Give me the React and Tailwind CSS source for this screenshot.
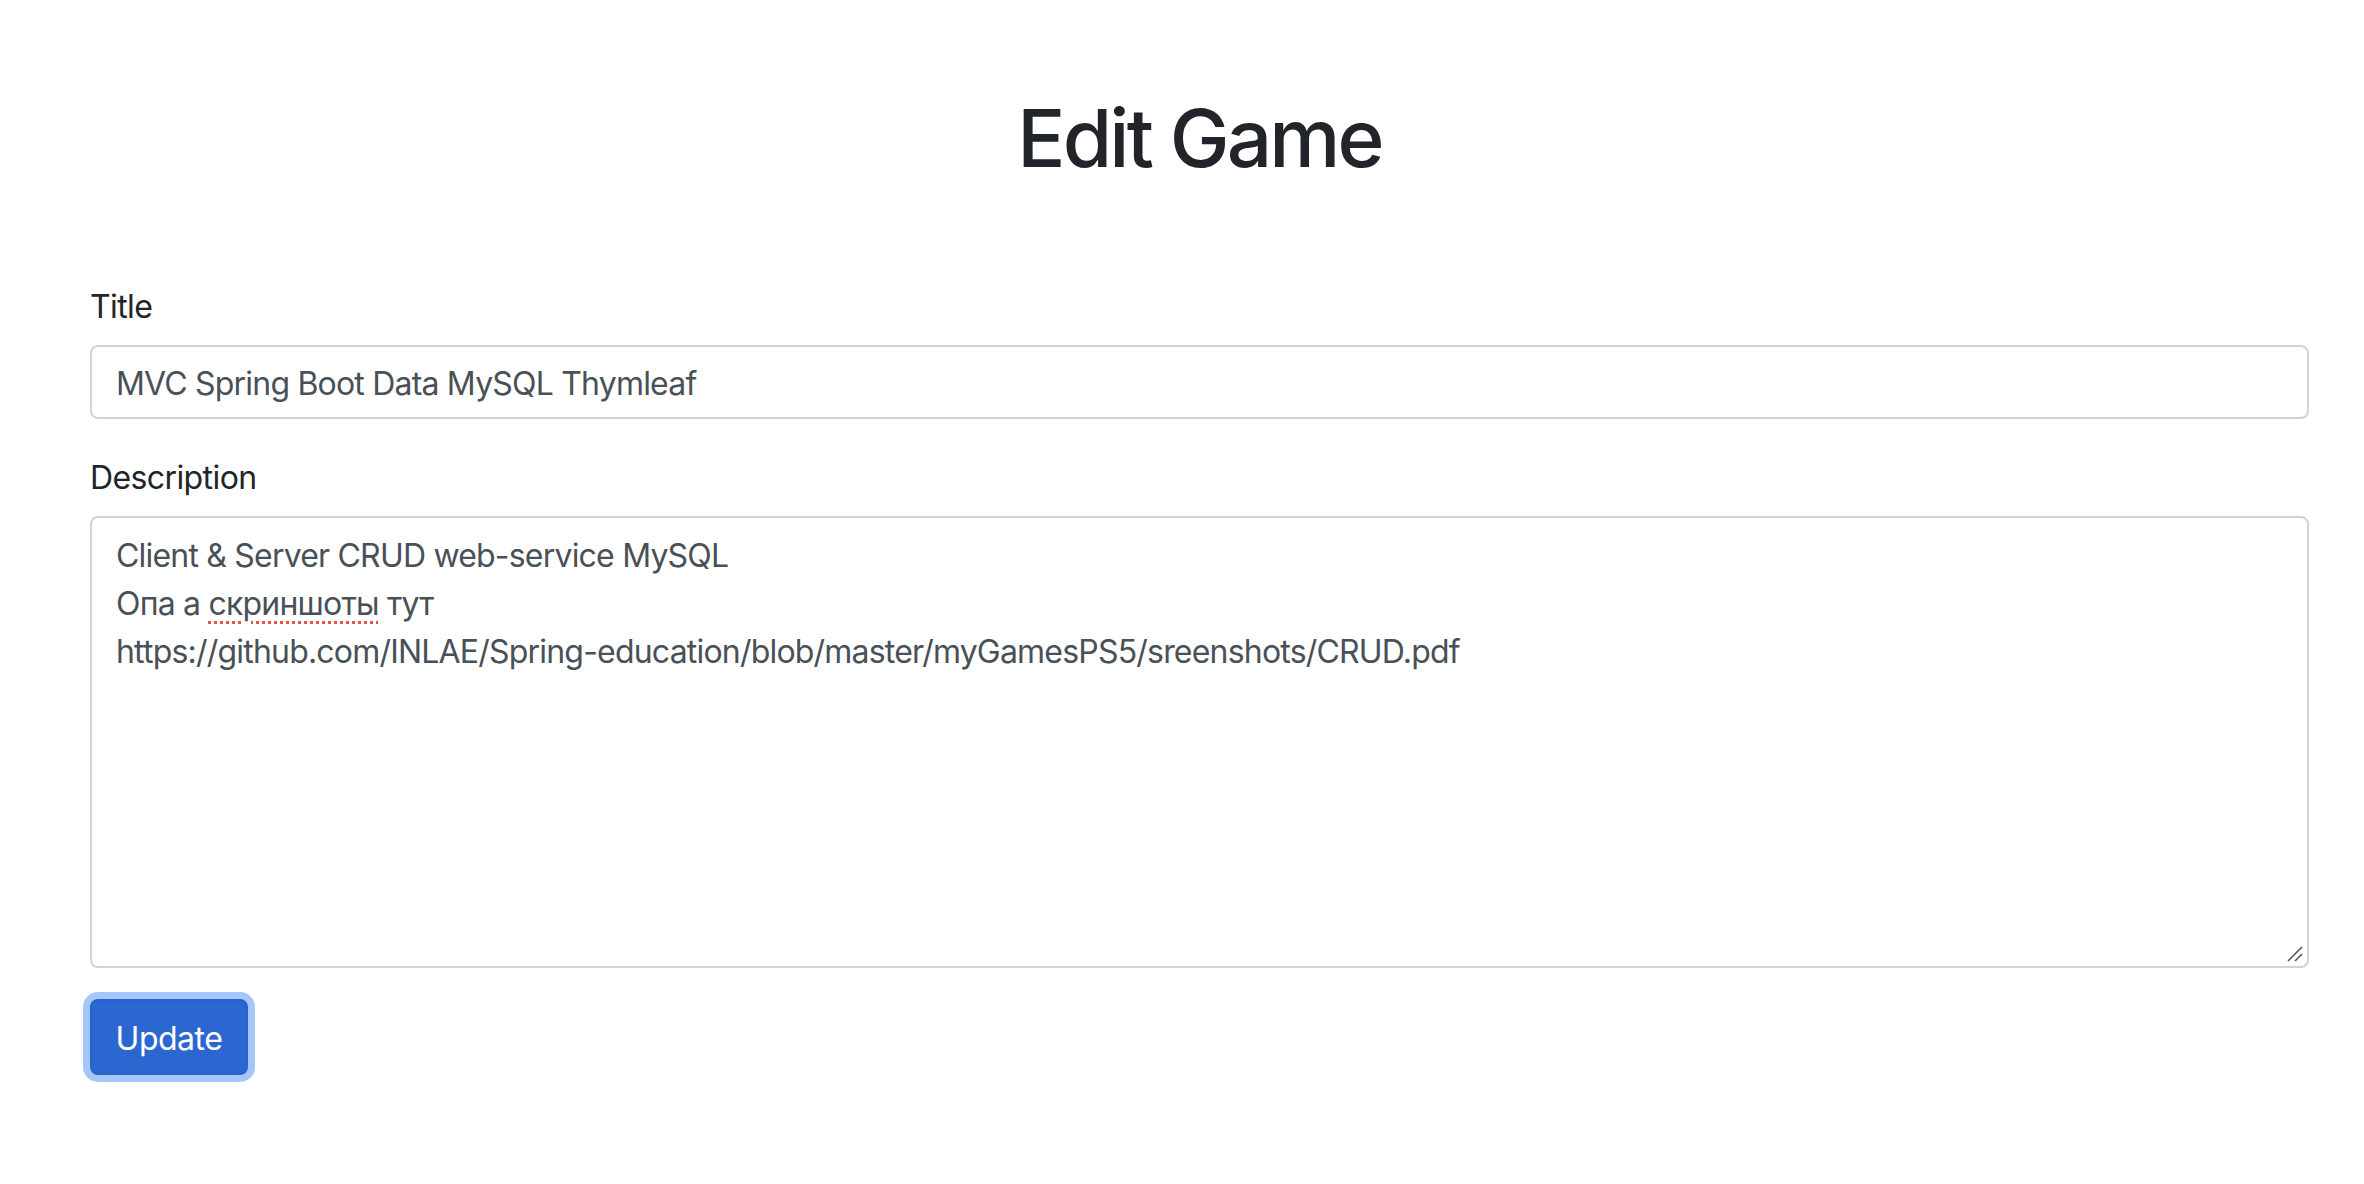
import React from "react";

export default function App() {
  return (
    <div
      className="min-h-screen bg-white pl-[90px] pr-[55px] text-[#212529]"
      style={{ fontFamily: "Inter, 'Noto Sans', 'Liberation Sans', sans-serif" }}
    >
      <h1 className="pt-[90px] text-center text-[80px] font-medium leading-[96px] tracking-[-2.8px]">
        Edit Game
      </h1>

      <form className="mt-[95px]" onSubmit={(e) => e.preventDefault()}>
        <div className="mb-[32px]">
          <label className="mb-[14px] block pt-[2px] text-[32px] leading-[48px] tracking-[-0.6px]">Title</label>
          <div className="h-[74px] w-full rounded-[8px] border-2 border-[#ced4da] px-[24px] pt-[2px] text-[32px] leading-[70px] tracking-[-0.8px] text-[#495057]">
            MVC Spring Boot Data MySQL Thymleaf
          </div>
        </div>

        <div className="mb-[31px]">
          <label className="mb-[14px] block pt-[3px] text-[32px] leading-[48px] tracking-[-0.6px]">Description</label>
          <div className="relative h-[452px] w-full rounded-[8px] border-2 border-[#ced4da] px-[24px] pb-[10px] pt-[14px] text-[32px] leading-[48px] tracking-[-0.8px] text-[#495057]">
            <div>Client &amp; Server CRUD web-service MySQL</div>
            <div>
              Опа а{" "}
              <span className="underline decoration-dotted decoration-[#e5534b] decoration-[3px] underline-offset-[6px]">
                скриншоты
              </span>{" "}
              тут
            </div>
            <div>https://github.com/INLAE/Spring-education/blob/master/myGamesPS5/sreenshots/CRUD.pdf</div>
            <svg
              className="absolute bottom-[3px] right-[3px]"
              width="18"
              height="18"
              viewBox="0 0 18 18"
            >
              <line x1="2" y1="16" x2="16" y2="2" stroke="#555" strokeWidth="1.6" />
              <line x1="9" y1="16" x2="16" y2="9" stroke="#555" strokeWidth="1.6" />
            </svg>
          </div>
        </div>

        <button
          type="submit"
          className="h-[76px] w-[158px] rounded-[8px] border-2 border-[#2a62c4] bg-[#2c67d1] pt-[3px] text-[32px] leading-[48px] tracking-[-0.5px] text-white shadow-[0_0_0_7px_#a3c7fa]"
        >
          Update
        </button>
      </form>
    </div>
  );
}
